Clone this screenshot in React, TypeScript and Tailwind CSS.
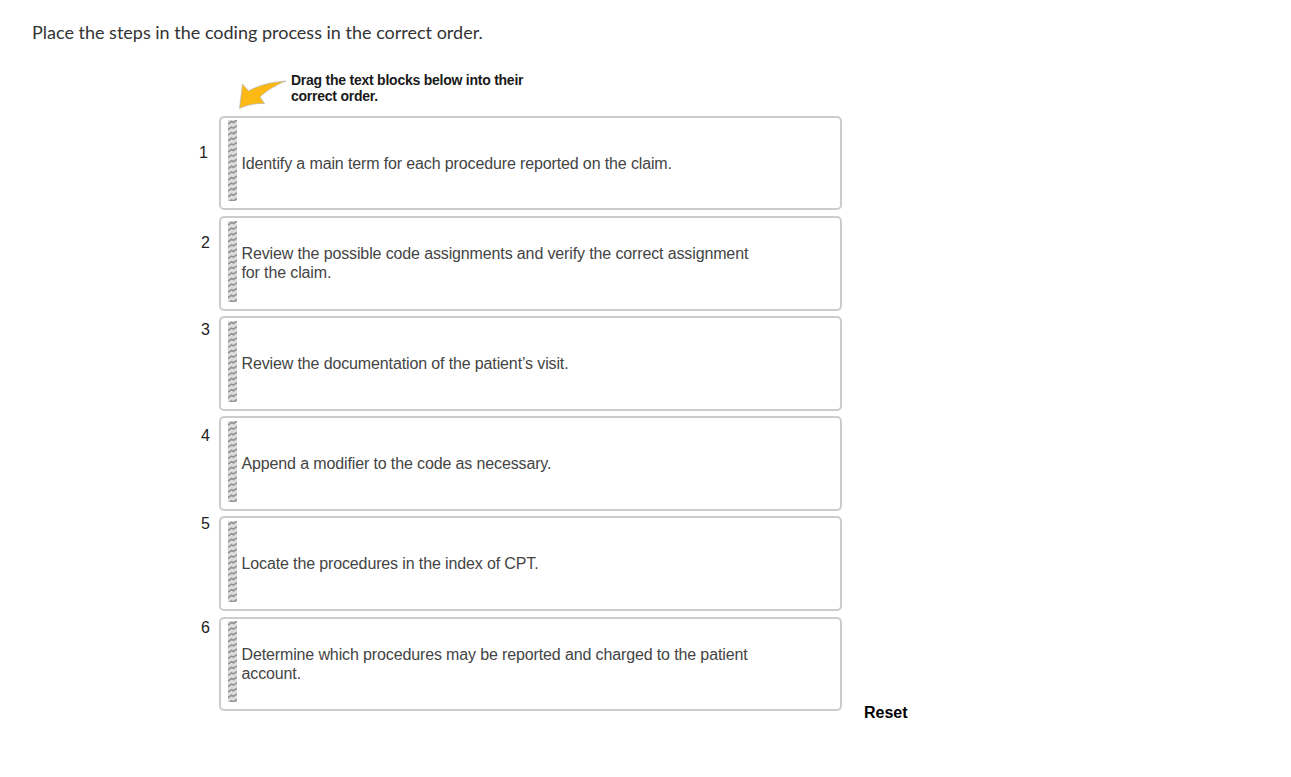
const steps = [
  { n: "1", text: "Identify a main term for each procedure reported on the claim.", num: "mt-[28px] pr-[11px]", card: "h-[94px]", gap: "mb-[6px]", body: "pt-[1px]", grip: "mt-[2px]" },
  { n: "2", text: "Review the possible code assignments and verify the correct assignment for the claim.", num: "mt-[18px] pr-[9px]", card: "h-[95px]", gap: "mb-[5px]", body: "pb-[2px]", grip: "mt-[3px]" },
  { n: "3", text: "Review the documentation of the patient’s visit.", num: "mt-[5px] pr-[9px]", card: "h-[95px]", gap: "mb-[5px]", body: "", grip: "mt-[3px]" },
  { n: "4", text: "Append a modifier to the code as necessary.", num: "mt-[11px] pr-[9px]", card: "h-[95px]", gap: "mb-[5px]", body: "", grip: "mt-[3px]" },
  { n: "5", text: "Locate the procedures in the index of CPT.", num: "mt-[-1px] pr-[9px]", card: "h-[95px]", gap: "mb-[6px]", body: "", grip: "mt-[3px]" },
  { n: "6", text: "Determine which procedures may be reported and charged to the patient account.", num: "mt-[2px] pr-[9px]", card: "h-[94px]", gap: "", body: "", grip: "mt-[2px]" },
];

function Grip({ className }: { className: string }) {
  return (
    <svg width="9" height="81" viewBox="0 0 9 81" className={`shrink-0 block self-start ${className}`}>
      <rect width="9" height="81" fill="#dcdcdc" />
      {Array.from({ length: 15 }).map((_, i) => {
        const y = i * 5.6 - 1;
        return (
          <path
            key={i}
            d={`M0 ${y + 5} L3.5 ${y + 2.5} L5.5 ${y + 3.5} L9 ${y + 1}`}
            stroke="#929292"
            strokeWidth="1.6"
            fill="none"
          />
        );
      })}
    </svg>
  );
}

export default function App() {
  return (
    <div className="min-h-[777px] bg-white relative font-['Liberation_Sans',Arial,sans-serif]">
      <div className="pl-[32px] pt-[22px] text-[18px] leading-[20px] text-[#333333] font-['Lato',sans-serif]">
        Place the steps in the coding process in the correct order.
      </div>
      <div className="ml-[291px] mt-[20px] w-[250px] text-[14px] leading-[16px] font-bold tracking-[-0.24px] text-[#1a1a1a] relative pt-[10px]">
        <svg width="52" height="32" viewBox="0 0 52 32" className="absolute left-[-52px] top-[18px]">
          <path d="M0.5 28.5 L3.5 4 L9.5 11 C20 5 33 2 47 1 C37 5 27 11 21 17 L25.5 23.5 C17 23 8 25 0.5 28.5 Z" fill="#fdb913" stroke="#b5b5b5" strokeWidth="0.7" />
        </svg>
        Drag the text blocks below into their correct order.
      </div>
      <div className="mt-[12px] flex w-[1291px]">
        <div className="flex flex-col">
          {steps.map((s) => (
            <div key={s.n} className={`flex ${s.gap}`}>
              <div className={`w-[219px] shrink-0 text-right text-[16px] leading-[18px] text-[#222222] ${s.num}`}>{s.n}</div>
              <div className={`${s.card} w-[623px] border-2 border-[#cccccc] rounded-[5px] flex items-center pl-[7px] pr-[80px] bg-white`}>
                <Grip className={s.grip} />
                <div className={`pl-[4.5px] text-[16px] leading-[19px] tracking-[-0.13px] text-[#444444] ${s.body}`}>{s.text}</div>
              </div>
            </div>
          ))}
        </div>
        <div className="self-end ml-[22px] mb-[-11px] text-[16px] leading-[18px] font-bold text-black">Reset</div>
      </div>
    </div>
  );
}
